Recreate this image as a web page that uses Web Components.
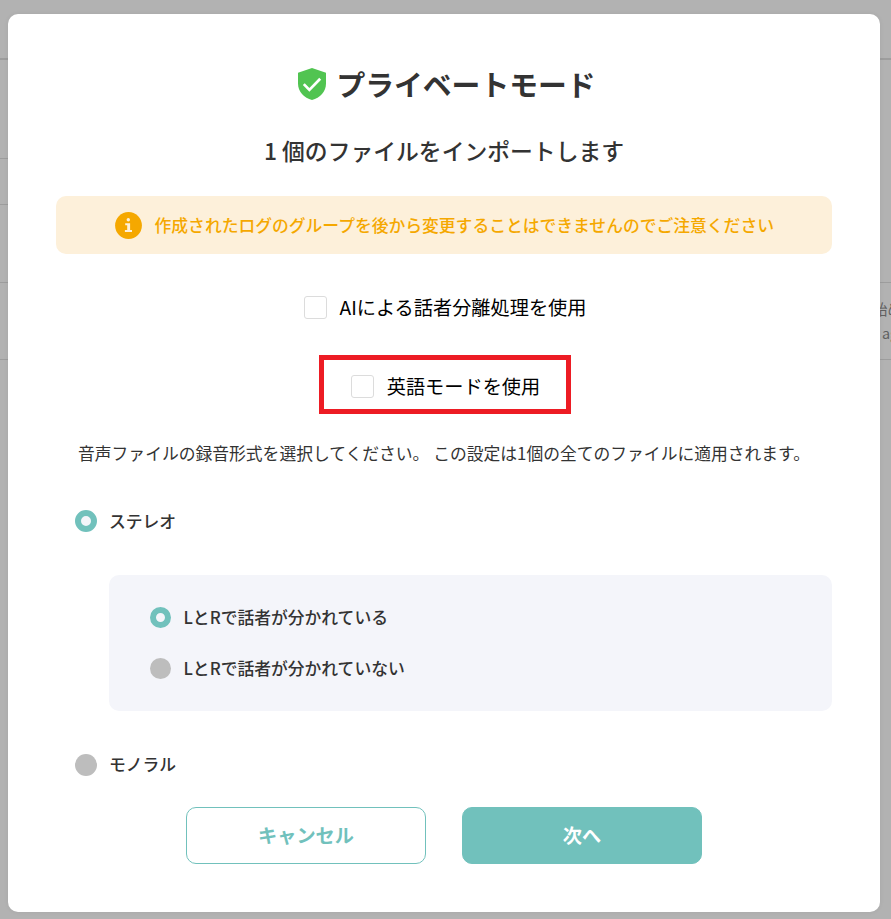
<!DOCTYPE html>
<html lang="ja">
<head>
<meta charset="utf-8">
<title>プライベートモード</title>
<style>
html,body{margin:0;height:100%;overflow:hidden}
body{font-family:"Noto Sans CJK JP",sans-serif;color:#333;background:#b2b2b2}
</style>
</head>
<body>
<app-screen></app-screen>
<script>
function define(name, html) {
  customElements.define(name, class extends HTMLElement {
    connectedCallback() {
      if (this.shadowRoot) return;
      this.attachShadow({mode: 'open'}).innerHTML = html;
    }
  });
}

define('page-backdrop', `<style>
:host{position:absolute;inset:0;display:grid;grid-template-rows:58px 100px 46px 78px 77px 1fr;background:#b2b2b2;color:#606060;font-size:14.4px;line-height:24px}
div{box-sizing:border-box}
.head{border-top:2px solid #9d9d9d}
.row{border-top:1px solid #9d9d9d}
.side{width:16px}
.text{padding:14px 0 0 873px;white-space:nowrap;overflow:hidden}
.text span{display:block}.text span+span{padding-left:9px}
</style><div></div><div class="head"></div><div class="row side"></div><div class="row side"></div><div class="row text"><span>始め</span><span>ag</span></div><div class="row"></div>`);

define('shield-icon', `<style>:host{display:block;width:28px;height:32px}svg{display:block}</style>
<svg width="28" height="32" viewBox="0 0 28 32"><path fill="#51c451" d="M14 0 28 4.7V15.5C28 23.5 22 30 14 32 6 30 0 23.5 0 15.5V4.7Z"/><path fill="none" stroke="#fff" stroke-width="2.7" d="m5.8 16.1 5.6 5.8L22.2 10.7"/></svg>`);

define('info-icon', `<style>:host{display:block;width:27px;height:27px}svg{display:block}</style>
<svg width="27" height="27" viewBox="0 0 27 27"><circle cx="13.5" cy="13.5" r="13.4" fill="#f5a800"/><g fill="#fdf0da"><circle cx="13.3" cy="7.8" r="1.7"/><path d="M10.2 11.2h4.9v6.7h1.9v2.1H9.9v-2.1h2.3v-4.6h-2z"/></g></svg>`);

define('notice-bar', `<style>
:host{display:flex;align-items:center;justify-content:center;gap:12.5px;height:58px;box-sizing:border-box;padding-left:1px;background:#fdf0da;border-radius:10px;color:#f5a800;font-size:16.8px;font-weight:500;white-space:nowrap}
</style><info-icon></info-icon><span><slot></slot></span>`);

define('check-option', `<style>
:host{display:flex;align-items:center;justify-content:center;gap:13px;color:#000;font-size:19.2px;line-height:28px;white-space:nowrap}
i{box-sizing:border-box;width:23px;height:23px;border:1px solid #dcdcdc;border-radius:3px;background:#fff}
</style><i></i><span><slot></slot></span>`);

define('radio-option', `<style>
:host{display:flex;align-items:center;gap:var(--gap,12px);font-size:16.8px;line-height:24px;font-weight:500;white-space:nowrap}
i{box-sizing:border-box;width:var(--dot,22px);height:var(--dot,22px);border-radius:50%;background:#bdbdbd}
:host([checked]) i{background:#f4f5fa;border:6px solid #71c1bc}
</style><i></i><span><slot></slot></span>`);

define('option-panel', `<style>
:host{display:flex;flex-direction:column;gap:27px;box-sizing:border-box;height:136px;padding:30px 41px;background:#f4f5fa;border-radius:10px;--dot:21px;--gap:12.5px}
</style><slot></slot>`);

define('action-button', `<style>
:host{display:block;width:240px;height:57px}
button{display:block;width:100%;height:100%;box-sizing:border-box;border:1px solid #71c1bc;border-radius:10px;background:#fff;color:#71c1bc;font:700 19.2px "Noto Sans CJK JP",sans-serif;padding:0 0 2px}
:host([primary]) button{background:#71c1bc;color:#fff}
</style><button><slot></slot></button>`);

define('modal-dialog', `<style>
:host{position:relative;display:flex;flex-direction:column;box-sizing:border-box;margin:14px 11px 7px 8px;height:898px;padding:48px 48px 0;background:#fff;border-radius:10px;box-shadow:0 0 5px rgba(0,0,0,.06)}
</style><slot></slot>`);

define('app-screen', `<style>
:host{display:block;position:relative;height:919px;overflow:hidden}
header{display:flex;align-items:center;justify-content:center;gap:10px;height:44px;padding-left:6px}
h1{margin:0;font-size:28.8px;line-height:44px;font-weight:700}
h2{margin:28px 0 0;text-align:center;font-size:22.8px;line-height:34px;font-weight:500}
notice-bar{margin-top:28px}
.ai{margin-top:39px;padding-left:2px}
.marked{box-sizing:border-box;align-self:center;width:252px;height:59px;margin:34px 0 0 2px;border:5px solid #ed1c24;display:flex;align-items:center;justify-content:center;padding:3px 0 0 1px}
p{margin:27px 0 0 22px;font-size:16.8px;line-height:24px;white-space:nowrap}
.stereo{margin:44px 0 0 19px}
option-panel{margin:42px 0 0 53px}
option-panel radio-option{height:24px}
.mono{margin:42px 0 0 19px}
.mono span{display:block;margin:-1px 0 1px}
footer{display:flex;justify-content:center;gap:36px;margin-top:30px}
</style>
<page-backdrop></page-backdrop>
<modal-dialog role="dialog">
<header><shield-icon></shield-icon><h1>プライベートモード</h1></header>
<h2>1 個のファイルをインポートします</h2>
<notice-bar>作成されたログのグループを後から変更することはできませんのでご注意ください</notice-bar>
<check-option class="ai">AIによる話者分離処理を使用</check-option>
<div class="marked"><check-option>英語モードを使用</check-option></div>
<p>音声ファイルの録音形式を選択してください。 この設定は1個の全てのファイルに適用されます。</p>
<radio-option class="stereo" checked>ステレオ</radio-option>
<option-panel><radio-option checked>LとRで話者が分かれている</radio-option><radio-option>LとRで話者が分かれていない</radio-option></option-panel>
<radio-option class="mono"><span>モノラル</span></radio-option>
<footer><action-button>キャンセル</action-button><action-button primary>次へ</action-button></footer>
</modal-dialog>`);
</script>
</body>
</html>
